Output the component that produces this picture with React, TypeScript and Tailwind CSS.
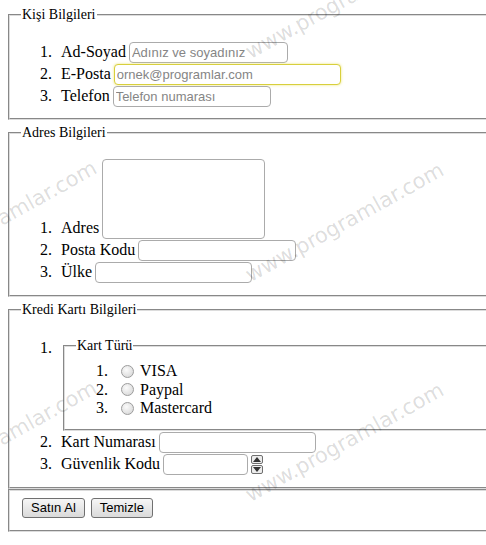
import type { ReactNode } from "react";

const inputCls =
  "h-[21px] mb-[1px] ml-[3px] rounded-[4px] border border-[#ababab] bg-white px-[2px] font-['Liberation_Sans',Arial,sans-serif] text-[13px] text-[#333] placeholder:text-[#858585] outline-none";

function Row({ n, label, children }: { n: number; label: string; children: ReactNode }) {
  return (
    <li className="flex items-end">
      <span className="h-[22px] w-[21px] shrink-0 leading-[20px]">{n}.</span>
      <span className="h-[22px] shrink-0 whitespace-nowrap leading-[20px]">{label}</span>
      {children}
    </li>
  );
}

function Box({ legend, className, children }: { legend?: string; className: string; children: ReactNode }) {
  return (
    <fieldset className={`border-2 [border-style:groove] border-[#dcdcdc] px-[12px] ${className}`}>
      {legend && <legend className="-ml-[1px] px-[1px] text-[14px] leading-4">{legend}</legend>}
      {children}
    </fieldset>
  );
}

function Radio() {
  return (
    <span className="mr-[6px] h-[13px] w-[13px] shrink-0 rounded-full border border-[#9c9c9c] bg-[radial-gradient(circle_at_40%_35%,#fbfbfb,#d2d2d2)]" />
  );
}

function Spin({ up }: { up?: boolean }) {
  return (
    <span className="flex h-[9px] w-[12px] items-center justify-center rounded-[2px] border border-[#6f6f6f] bg-[#ececec]">
      <svg width="8" height="5" viewBox="0 0 8 5">
        <polygon points={up ? "4,0 8,5 0,5" : "0,0 8,0 4,5"} fill="#333" />
      </svg>
    </span>
  );
}

const marks = [
  { x: "left-[345px]", y: "top-[0px]" },
  { x: "left-[345px]", y: "top-[223px]" },
  { x: "left-[345px]", y: "top-[443px]" },
  { x: "left-[-2px]", y: "top-[221px]" },
  { x: "left-[-2px]", y: "top-[441px]" },
];

export default function App() {
  return (
    <div className="relative h-[545px] w-[486px] overflow-hidden bg-white font-['Liberation_Serif','Times_New_Roman',serif] text-[16px] text-black">
      <div className="w-[560px] pl-[8px] pt-[7px]">
        <Box legend="Kişi Bilgileri" className="pt-[19px] pb-[10px]">
          <ol className="pl-[18px]">
            <Row n={1} label="Ad-Soyad">
              <input className={`${inputCls} w-[159px]`} placeholder="Adınız ve soyadınız" />
            </Row>
            <Row n={2} label="E-Posta">
              <input
                className={`${inputCls} w-[227px] border-[#d8cf3c] bg-[#fffff4] shadow-[0_0_3px_#ece57a]`}
                placeholder="ornek@programlar.com"
              />
            </Row>
            <Row n={3} label="Telefon">
              <input className={`${inputCls} w-[158px]`} placeholder="Telefon numarası" />
            </Row>
          </ol>
        </Box>

        <Box legend="Adres Bilgileri" className="mt-[5px] pt-[18px] pb-[11px]">
          <ol className="pl-[18px]">
            <Row n={1} label="Adres">
              <textarea className={`${inputCls} h-[80px] w-[163px] resize-none`} />
            </Row>
            <Row n={2} label="Posta Kodu">
              <input className={`${inputCls} w-[158px]`} />
            </Row>
            <Row n={3} label="Ülke">
              <input className={`${inputCls} w-[157px]`} />
            </Row>
          </ol>
        </Box>

        <Box legend="Kredi Kartı Bilgileri" className="mt-[5px] pt-[20px] pb-[11px]">
          <ol className="pl-[18px]">
            <li className="flex items-start">
              <span className="w-[21px] shrink-0 leading-[20px]">1.</span>
              <Box legend="Kart Türü" className="ml-[2px] mb-[1px] flex-1 pt-[8px] pb-[11px]">
                <ol className="pl-[19px]">
                  {["VISA", "Paypal", "Mastercard"].map((t, i) => (
                    <li key={t} className="flex h-[18.5px] items-center">
                      <span className="w-[25px] shrink-0">{i + 1}.</span>
                      <Radio />
                      <span>{t}</span>
                    </li>
                  ))}
                </ol>
              </Box>
            </li>
            <Row n={2} label="Kart Numarası">
              <input className={`${inputCls} w-[157px]`} />
            </Row>
            <Row n={3} label="Güvenlik Kodu">
              <input className={`${inputCls} w-[85px]`} />
              <span className="mb-[2px] ml-[3px] flex flex-col gap-[1px]">
                <Spin up />
                <Spin />
              </span>
            </Row>
          </ol>
        </Box>

        <Box className="pt-[7px] pb-[12px]">
          <div className="flex gap-[6px] font-['Liberation_Sans',Arial,sans-serif] text-[13px]">
            <button className="h-[20px] rounded-[3px] border border-[#707070] bg-gradient-to-b from-[#f6f6f6] to-[#dadada] px-[8px] leading-[18px]">
              Satın Al
            </button>
            <button className="h-[20px] rounded-[3px] border border-[#707070] bg-gradient-to-b from-[#f6f6f6] to-[#dadada] px-[8px] leading-[18px]">
              Temizle
            </button>
          </div>
        </Box>
      </div>

      <div className="pointer-events-none absolute inset-0">
        {marks.map((m, i) => (
          <span
            key={i}
            className={`absolute ${m.x} ${m.y} -translate-x-1/2 -translate-y-1/2 -rotate-[29deg] whitespace-nowrap font-['DejaVu_Sans',sans-serif] text-[21px] text-black/15`}
          >
            www.programlar.com
          </span>
        ))}
      </div>
    </div>
  );
}
